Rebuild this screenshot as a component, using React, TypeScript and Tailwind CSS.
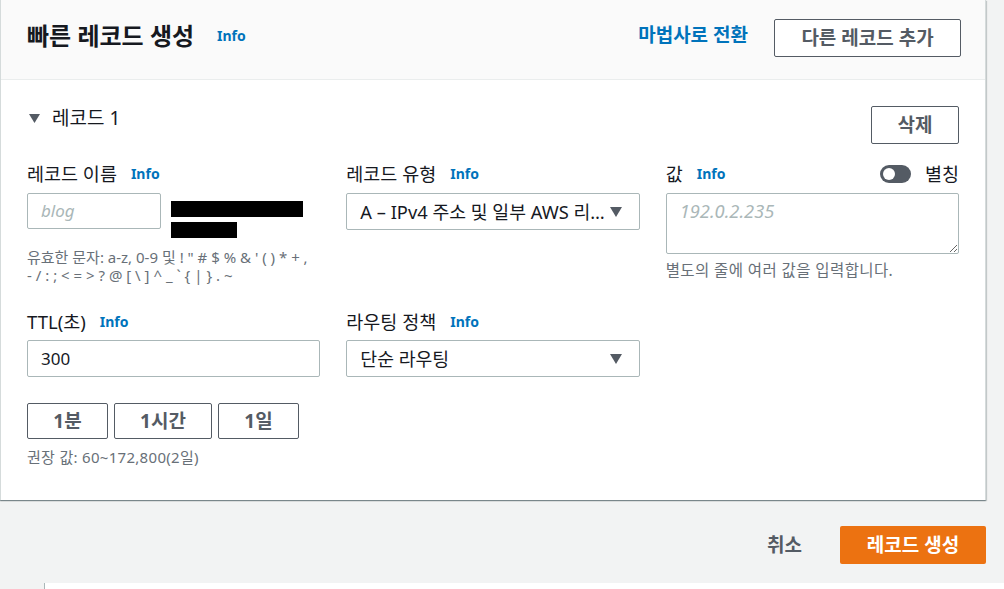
const Info = () => (
  <span className="text-[14px] font-bold text-[#0073bb] leading-none">Info</span>
);

const Label = ({ text }: { text: string }) => (
  <div className="flex items-center gap-[14px] h-[24px] text-[18.5px] leading-[24px] text-[#16191f]">
    <span>{text}</span>
    <Info />
  </div>
);

const Caret = () => (
  <svg width="14" height="12" viewBox="0 0 14 12" className="shrink-0">
    <path d="M1 1h12L7 11z" fill="#545b64" />
  </svg>
);

const Select = ({ value }: { value: string }) => (
  <div className="flex items-center justify-between h-[37px] border border-[#aab7b8] rounded-[2px] bg-white pl-[13px] pr-[16px] text-[18.3px] text-[#16191f]">
    <span className="whitespace-nowrap">{value}</span>
    <Caret />
  </div>
);

const OutlineButton = ({ text, className }: { text: string; className: string }) => (
  <button
    className={
      "border border-[#545b64] rounded-[2px] bg-white text-[19px] font-bold text-[#545b64] " + className
    }
  >
    {text}
  </button>
);

const App = () => {
  return (
    <div className="w-[1004px] h-[589px] overflow-hidden bg-[#f2f3f3] font-[family-name:'Noto_Sans','Noto_Sans_CJK_KR',sans-serif]">
      <div className="w-[986px] bg-white border-x border-[#d5dbdb] shadow-[0_1px_1px_0_rgba(0,28,36,0.3),1px_1px_1px_0_rgba(0,28,36,0.15),-1px_1px_1px_0_rgba(0,28,36,0.15)]">
        {/* header */}
        <div className="h-[80px] bg-[#fafafa] border-b border-[#eaeded] flex items-start justify-between pl-[26px] pr-[24px] pt-[19px]">
          <div className="flex items-center gap-[23px] h-[34px]">
            <h1 className="text-[24px] font-bold text-[#16191f]">빠른 레코드 생성</h1>
            <Info />
          </div>
          <div className="flex items-center gap-[26px]">
            <span className="text-[19px] font-bold text-[#0073bb] -mt-[5px]">마법사로 전환</span>
            <OutlineButton text="다른 레코드 추가" className="w-[187px] h-[38px]" />
          </div>
        </div>

        {/* body */}
        <div className="px-[26px] pt-[26px] pb-[34px]">
          <div className="flex items-start justify-between">
            <div className="flex items-center gap-[12px] h-[24px] pl-[2px] text-[19px] text-[#16191f]">
              <svg width="11" height="9" viewBox="0 0 11 9">
                <path d="M0 0h11L5.5 9z" fill="#545b64" />
              </svg>
              <span>레코드 1</span>
            </div>
            <OutlineButton text="삭제" className="w-[88px] h-[38px]" />
          </div>

          <div className="grid grid-cols-3 gap-x-[26px] mt-[18px]">
            <div>
              <Label text="레코드 이름" />
              <div className="flex items-start gap-[10px] mt-[7px] h-[45px]">
                <div className="w-[134px] h-[36px] border border-[#aab7b8] rounded-[2px] flex items-center pl-[13px] text-[17px] italic text-[#aab7b8]">
                  blog
                </div>
                <div className="flex flex-col gap-[5px] pt-[8px]">
                  <div className="w-[132px] h-[16px] bg-black" />
                  <div className="w-[66px] h-[16px] bg-black" />
                </div>
              </div>
              <p className="mt-[10px] text-[15px] leading-[18px] text-[#687078] whitespace-nowrap">
                유효한 문자: a-z, 0-9 및 ! " # $ % &amp; ' ( ) * + ,
                <br />- / : ; &lt; = &gt; ? @ [ \ ] ^ _ ` {"{"} | {"}"} . ~
              </p>
            </div>
            <div>
              <Label text="레코드 유형" />
              <div className="mt-[7px]">
                <Select value="A – IPv4 주소 및 일부 AWS 리…" />
              </div>
            </div>
            <div>
              <div className="flex items-center justify-between h-[24px]">
                <Label text="값" />
                <div className="flex items-center gap-[14px]">
                  <div className="w-[31px] h-[18px] rounded-full bg-[#545b64] flex items-center pl-[3px]">
                    <div className="w-[12px] h-[12px] rounded-full bg-white" />
                  </div>
                  <span className="text-[18.5px] leading-[24px] text-[#16191f]">별칭</span>
                </div>
              </div>
              <textarea
                className="mt-[7px] block w-full h-[61px] border border-[#aab7b8] rounded-[2px] px-[13px] pt-[3px] text-[18.3px] italic placeholder:text-[#aab7b8] outline-none"
                placeholder="192.0.2.235"
              />
              <p className="mt-[7px] text-[15.5px] leading-[18px] text-[#687078] tracking-[0.4px]">
                별도의 줄에 여러 값을 입력합니다.
              </p>
            </div>
          </div>

          <div className="grid grid-cols-3 gap-x-[26px] mt-[26px]">
            <div>
              <Label text="TTL(초)" />
              <div className="mt-[6px] h-[37px] border border-[#aab7b8] rounded-[2px] flex items-center pl-[13px] text-[17px] text-[#16191f]">
                300
              </div>
              <div className="flex gap-[6px] mt-[26px]">
                <OutlineButton text="1분" className="w-[81px] h-[36px]" />
                <OutlineButton text="1시간" className="w-[98px] h-[36px]" />
                <OutlineButton text="1일" className="w-[81px] h-[36px]" />
              </div>
              <p className="mt-[9px] text-[15px] leading-[18px] text-[#687078] tracking-[0.3px]">
                권장 값: 60~172,800(2일)
              </p>
            </div>
            <div>
              <Label text="라우팅 정책" />
              <div className="mt-[6px]">
                <Select value="단순 라우팅" />
              </div>
            </div>
            <div />
          </div>
        </div>
      </div>

      {/* footer actions */}
      <div className="w-[986px] flex items-center justify-end gap-[38px] mt-[26px]">
        <button className="text-[19px] font-bold text-[#545b64]">취소</button>
        <button className="w-[146px] h-[38px] rounded-[2px] bg-[#ec7211] text-[19px] font-bold text-white">
          레코드 생성
        </button>
      </div>

      <div className="ml-[44px] mt-[19px] h-[20px] bg-white border-l border-[#aab7b8]" />
    </div>
  );
};

export default App;
